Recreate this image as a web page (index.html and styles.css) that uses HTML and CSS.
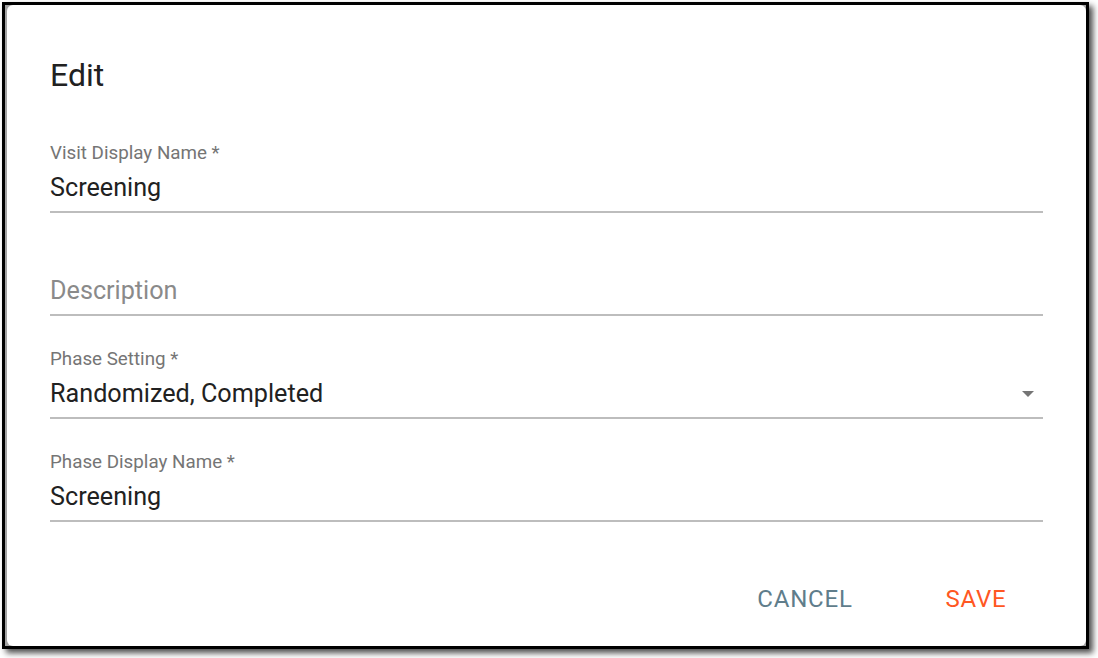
FILE: index.html
```html
<!DOCTYPE html>
<html>
<head>
<meta charset="utf-8">
<link rel="stylesheet" href="styles.css">
</head>
<body>
<div class="frame">
  <div class="dialog">
    <h1 class="title">Edit</h1>
    <div class="field">
      <div class="label">Visit Display Name *</div>
      <div class="value">Screening</div>
    </div>
    <div class="field">
      <div class="label"></div>
      <div class="value placeholder">Description</div>
    </div>
    <div class="field">
      <div class="label">Phase Setting *</div>
      <div class="value select">
        <span>Randomized, Completed</span>
        <svg class="arrow" width="12" height="6" viewBox="0 0 12 6"><path d="M0 0 L12 0 L6 6 Z" fill="#757575"/></svg>
      </div>
    </div>
    <div class="field">
      <div class="label">Phase Display Name *</div>
      <div class="value">Screening</div>
    </div>
    <div class="actions">
      <button class="btn cancel">CANCEL</button>
      <button class="btn save">SAVE</button>
    </div>
  </div>
</div>
</body>
</html>
```

FILE: styles.css
```css
html, body {
  margin: 0;
  padding: 0;
  background: #ffffff;
}
body {
  width: 1098px;
  height: 658px;
  overflow: hidden;
  font-family: Roboto, "Liberation Sans", sans-serif;
}
.frame {
  box-sizing: border-box;
  margin: 2px 0 0 2px;
  width: 1087px;
  height: 647px;
  border: 3px solid #000;
  background: #a3a3a3;
  box-shadow: 4px 4px 6px rgba(0, 0, 0, 0.7);
  display: flex;
}
.dialog {
  flex: 1;
  margin-left: 2px;
  background: #fff;
  border-radius: 6px;
  padding: 50px 43px 0 43px;
  display: flex;
  flex-direction: column;
}
.title {
  margin: 0 0 46px 0;
  font-size: 32px;
  line-height: 40px;
  font-weight: 400;
  color: #212121;
}
.field {
  border-bottom: 2px solid #bdbdbd;
  padding-top: 1px;
  padding-bottom: 7px;
  margin-bottom: 31px;
}
.label {
  height: 22px;
  line-height: 22px;
  font-size: 18.8px;
  color: #757575;
  margin-bottom: 8px;
}
.value {
  height: 32px;
  line-height: 32px;
  font-size: 25.2px;
  color: #212121;
}
.placeholder {
  color: #8a8a8a;
}
.select {
  display: flex;
  align-items: center;
  justify-content: space-between;
}
.arrow {
  margin-right: 9px;
}
.actions {
  display: flex;
  justify-content: flex-end;
  gap: 39px;
  margin-top: 22px;
  margin-right: 1px;
}
.btn {
  width: 132px;
  height: 48px;
  border: none;
  background: transparent;
  font-family: Roboto, "Liberation Sans", sans-serif;
  font-size: 24px;
  letter-spacing: 0.8px;
  padding: 0;
  cursor: pointer;
}
.cancel {
  color: #607d8b;
}
.save {
  color: #ff5722;
}
```
